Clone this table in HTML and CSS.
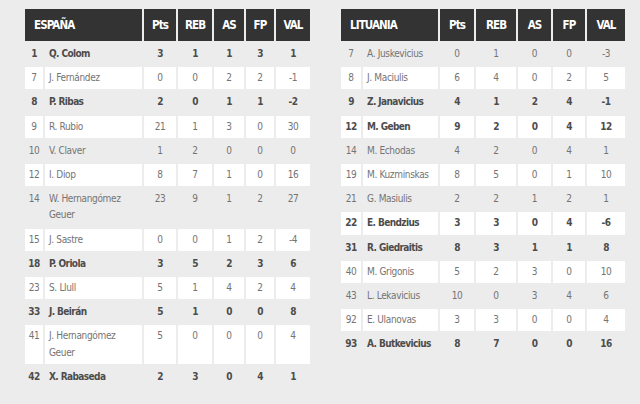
FILE: index.html
```html
<!DOCTYPE html>
<html lang="es">
<head>
<meta charset="utf-8">
<link rel="stylesheet" href="styles.css">
</head>
<body>
<div class="page">
  <table class="stats stats-left">
    <colgroup>
      <col class="c-num-l"><col class="c-name-l"><col class="c-pts-l"><col class="c-reb-l"><col class="c-as-l"><col class="c-fp-l"><col class="c-val-l">
    </colgroup>
    <thead>
      <tr><th colspan="2" class="team">ESPAÑA</th><th>Pts</th><th>REB</th><th>AS</th><th>FP</th><th>VAL</th></tr>
    </thead>
    <tbody>
      <tr class="b"><td>1</td><td class="name">Q. Colom</td><td>3</td><td>1</td><td>1</td><td>3</td><td>1</td></tr>
      <tr><td>7</td><td class="name">J. Fernández</td><td>0</td><td>0</td><td>2</td><td>2</td><td>-1</td></tr>
      <tr class="b"><td>8</td><td class="name">P. Ribas</td><td>2</td><td>0</td><td>1</td><td>1</td><td>-2</td></tr>
      <tr><td>9</td><td class="name">R. Rubio</td><td>21</td><td>1</td><td>3</td><td>0</td><td>30</td></tr>
      <tr><td>10</td><td class="name">V. Claver</td><td>1</td><td>2</td><td>0</td><td>0</td><td>0</td></tr>
      <tr><td>12</td><td class="name">I. Diop</td><td>8</td><td>7</td><td>1</td><td>0</td><td>16</td></tr>
      <tr><td>14</td><td class="name">W. Hernangómez Geuer</td><td>23</td><td>9</td><td>1</td><td>2</td><td>27</td></tr>
      <tr><td>15</td><td class="name">J. Sastre</td><td>0</td><td>0</td><td>1</td><td>2</td><td>-4</td></tr>
      <tr class="b"><td>18</td><td class="name">P. Oriola</td><td>3</td><td>5</td><td>2</td><td>3</td><td>6</td></tr>
      <tr><td>23</td><td class="name">S. Llull</td><td>5</td><td>1</td><td>4</td><td>2</td><td>4</td></tr>
      <tr class="b"><td>33</td><td class="name">J. Beirán</td><td>5</td><td>1</td><td>0</td><td>0</td><td>8</td></tr>
      <tr><td>41</td><td class="name">J. Hernangómez Geuer</td><td>5</td><td>0</td><td>0</td><td>0</td><td>4</td></tr>
      <tr class="b"><td>42</td><td class="name">X. Rabaseda</td><td>2</td><td>3</td><td>0</td><td>4</td><td>1</td></tr>
    </tbody>
  </table>

  <table class="stats stats-right">
    <colgroup>
      <col class="c-num-r"><col class="c-name-r"><col class="c-pts-r"><col class="c-reb-r"><col class="c-as-r"><col class="c-fp-r"><col class="c-val-r">
    </colgroup>
    <thead>
      <tr><th colspan="2" class="team">LITUANIA</th><th>Pts</th><th>REB</th><th>AS</th><th>FP</th><th>VAL</th></tr>
    </thead>
    <tbody>
      <tr><td>7</td><td class="name">A. Juskevicius</td><td>0</td><td>1</td><td>0</td><td>0</td><td>-3</td></tr>
      <tr><td>8</td><td class="name">J. Maciulis</td><td>6</td><td>4</td><td>0</td><td>2</td><td>5</td></tr>
      <tr class="b"><td>9</td><td class="name">Z. Janavicius</td><td>4</td><td>1</td><td>2</td><td>4</td><td>-1</td></tr>
      <tr class="b"><td>12</td><td class="name">M. Geben</td><td>9</td><td>2</td><td>0</td><td>4</td><td>12</td></tr>
      <tr><td>14</td><td class="name">M. Echodas</td><td>4</td><td>2</td><td>0</td><td>4</td><td>1</td></tr>
      <tr><td>19</td><td class="name">M. Kuzminskas</td><td>8</td><td>5</td><td>0</td><td>1</td><td>10</td></tr>
      <tr><td>21</td><td class="name">G. Masiulis</td><td>2</td><td>2</td><td>1</td><td>2</td><td>1</td></tr>
      <tr class="b"><td>22</td><td class="name">E. Bendzius</td><td>3</td><td>3</td><td>0</td><td>4</td><td>-6</td></tr>
      <tr class="b"><td>31</td><td class="name">R. Giedraitis</td><td>8</td><td>3</td><td>1</td><td>1</td><td>8</td></tr>
      <tr><td>40</td><td class="name">M. Grigonis</td><td>5</td><td>2</td><td>3</td><td>0</td><td>10</td></tr>
      <tr><td>43</td><td class="name">L. Lekavicius</td><td>10</td><td>0</td><td>3</td><td>4</td><td>6</td></tr>
      <tr><td>92</td><td class="name">E. Ulanovas</td><td>3</td><td>3</td><td>0</td><td>0</td><td>4</td></tr>
      <tr class="b"><td>93</td><td class="name">A. Butkevicius</td><td>8</td><td>7</td><td>0</td><td>0</td><td>16</td></tr>
    </tbody>
  </table>
</div>
</body>
</html>
```

FILE: styles.css
```css
html, body {
  margin: 0;
  padding: 0;
  background: #ececec;
}

.page {
  display: flex;
  align-items: flex-start;
  gap: 27px;
  padding: 7px 0 0 23px;
  font-family: "DejaVu Sans Condensed", "Liberation Sans", sans-serif;
}

.stats {
  border-collapse: separate;
  border-spacing: 2px;
  table-layout: fixed;
}

.stats-left { width: 289px; }
.stats-right { width: 288px; }

.c-num-l { width: 18px; }
.c-name-l { width: 97px; }
.c-pts-l { width: 32px; }
.c-reb-l { width: 34px; }
.c-as-l { width: 30px; }
.c-fp-l { width: 28px; }
.c-val-l { width: 34px; }

.c-num-r { width: 20px; }
.c-name-r { width: 75px; }
.c-pts-r { width: 34px; }
.c-reb-r { width: 40px; }
.c-as-r { width: 33px; }
.c-fp-r { width: 32px; }
.c-val-r { width: 38px; }

.stats th {
  background: #333333;
  color: #ffffff;
  font-weight: bold;
  font-size: 11.5px;
  letter-spacing: -0.9px;
  height: 32px;
  padding: 0;
  text-align: center;
  vertical-align: middle;
}

.stats th.team {
  text-align: left;
  padding-left: 9px;
}

.stats td {
  font-size: 10px;
  line-height: 16.2px;
  color: #747474;
  padding: 3px 0;
  text-align: center;
  vertical-align: top;
  letter-spacing: -0.35px;
}

.stats td.name {
  text-align: left;
  padding-left: 4px;
  padding-right: 2px;
}

.stats tbody tr:nth-child(even) td {
  background: #ffffff;
}

.stats tr.b td {
  font-weight: bold;
  color: #4c4c4c;
  letter-spacing: -0.6px;
}
```
